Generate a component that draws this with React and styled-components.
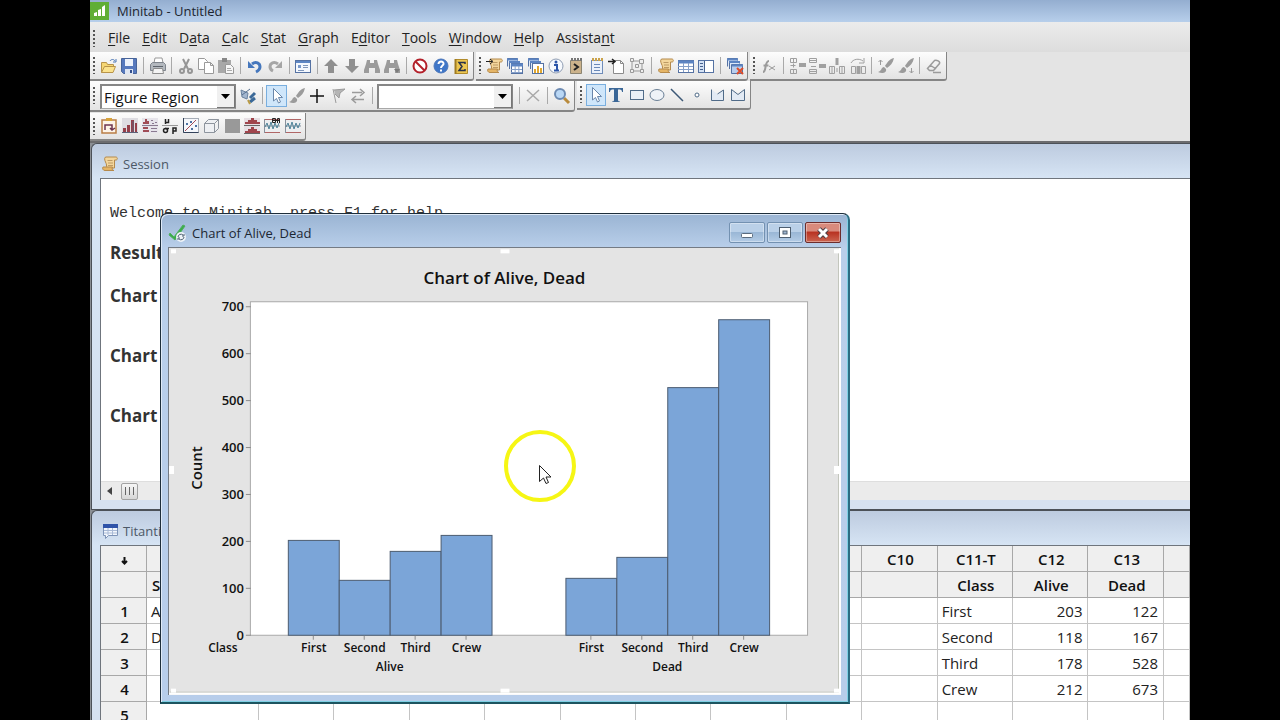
import React from "react";
import styled, { createGlobalStyle, css } from "styled-components";

const GlobalStyle = createGlobalStyle`
  *, *::before, *::after { box-sizing: border-box; }
  body { margin: 0; background: #000; }
  button, select, input { font: inherit; color: inherit; }
`;

/* ---------- application frame ---------- */

const Stage = styled.div`
  height: 100vh;
  padding: 0 90px;
  overflow: hidden;
  background: #000;
  font-family: "Open Sans", "Noto Sans", sans-serif;
  font-size: 13px;
  color: #222;
`;

const AppFrame = styled.div`
  position: relative;
  display: flex;
  flex-direction: column;
  height: 100%;
  overflow: hidden;
  background: #e4e4e4;
`;

const TitleBar = styled.header`
  display: flex;
  align-items: center;
  gap: 8px;
  height: 22px;
  flex: none;
  background: linear-gradient(#94aed0, #b7cfeb);
  font-size: 13px;
  color: #1c2530;
`;

const MenuBar = styled.nav`
  display: flex;
  align-items: center;
  gap: 3px;
  height: 30px;
  flex: none;
  padding: 2px 2px 0;
  background: linear-gradient(#ececec, #dddddd);
`;

const MenuItem = styled.button`
  padding: 0 6px;
  border: 0;
  background: none;
  font-size: 14px;
  line-height: 20px;
  color: #222;
  u { text-underline-offset: 2px; }
`;

const MenuList = styled.div`
  display: flex;
  align-items: center;
`;

const ToolArea = styled.div`
  flex: none;
  background: #e4e4e4;
  border-bottom: 2px solid #6c6c6e;
`;

const ToolRow = styled.div`
  display: flex;
  align-items: flex-start;
  gap: 2px;
  height: ${(p) => p.$height}px;
`;

const ToolGroup = styled.div`
  display: flex;
  align-items: center;
  width: ${(p) => p.$width}px;
  height: ${(p) => p.$height}px;
  padding: 0 2px;
  border-right: 1px solid #858585;
  border-bottom: 2px solid #858585;
  border-radius: 0 0 3px 0;
  background: linear-gradient(#fdfdfd, #e3e3e3);
`;

const Grip = styled.span`
  flex: none;
  width: 4px;
  height: 17px;
  margin-right: 3px;
  background: radial-gradient(circle at 2px 1px, #555 1px, transparent 1px) 0 0 / 4px 4px;
`;

const ToolButton = styled.button`
  display: flex;
  flex: 1;
  align-items: center;
  justify-content: center;
  height: 22px;
  min-width: 0;
  padding: 0;
  border: 1px solid ${(p) => (p.$active ? "#79aede" : "transparent")};
  background: ${(p) => (p.$active ? "#cfe6fa" : "none")};
  svg { flex: none; }
`;

const Divider = styled.span`
  flex: none;
  width: 8px;
  height: 17px;
  background: linear-gradient(#a9a9a9, #a9a9a9) center / 1px 100% no-repeat;
`;

const Combo = styled.label`
  position: relative;
  flex: none;
  width: 136px;
  height: 25px;
  margin: 2px 2px 0 1px;
  select {
    width: 100%;
    height: 100%;
    padding: 0 22px 0 2px;
    border: 2px solid #868686;
    border-right: 1px solid #868686;
    border-bottom: 1px solid #a8a8a8;
    border-radius: 0;
    appearance: none;
    background: #fff;
    font-size: 15px;
    line-height: 20px;
    color: #111;
  }
`;

const ComboArrow = styled.span`
  position: absolute;
  right: 1px;
  top: 2px;
  bottom: 1px;
  width: 18px;
  display: flex;
  align-items: center;
  justify-content: center;
  border-right: 1px solid #777;
  border-bottom: 1px solid #777;
  background: #f0f0f0;
  pointer-events: none;
`;

/* ---------- child windows ---------- */

const Workspace = styled.main`
  position: relative;
  display: grid;
  grid-template-rows: 367px 1fr;
  flex: 1;
  min-height: 0;
  padding-left: 1px;
  background: #8b8f94;
`;

const ChildWindow = styled.section`
  display: flex;
  flex-direction: column;
  min-width: 0;
  min-height: 0;
  padding: 0 0 ${(p) => p.$bottom}px 8px;
  border: solid #4c5158;
  border-width: 1px 0 ${(p) => (p.$bottom ? 1 : 0)}px 1px;
  border-top-left-radius: 6px;
  background: linear-gradient(#bdcbdf, #d6e4f4 34px, #d6e1f0);
`;

const ChildTitle = styled.h2`
  display: flex;
  align-items: center;
  gap: 4px;
  flex: none;
  height: 34px;
  margin: 0;
  padding: 6px 0 0 1px;
  font-size: 13px;
  font-weight: 400;
  color: #4c5867;
`;

const Pane = styled.div`
  display: flex;
  flex-direction: column;
  flex: 1;
  min-height: 0;
  overflow: hidden;
  border: solid #6f757d;
  border-width: 1px 0 0 1px;
  background: #fff;
`;

const SessionText = styled.div`
  display: flex;
  flex-direction: column;
  flex: 1;
  padding: 24px 9px 0;
`;

const Welcome = styled.p`
  margin: 0 0 16px;
  font: 15px/22px "Liberation Mono", monospace;
  color: #333;
`;

const SessionHeading = styled.h3`
  margin: 0 0 ${(p) => p.$after}px;
  font-size: 17px;
  line-height: 24px;
  font-weight: 700;
  color: #333;
`;

const ScrollTrack = styled.div`
  display: flex;
  align-items: center;
  gap: 3px;
  flex: none;
  height: 19px;
  background: #ebebeb;
  border-top: 1px solid #dedede;
`;

const ScrollButton = styled.button`
  display: flex;
  align-items: center;
  justify-content: center;
  width: 17px;
  height: 17px;
  padding: 0;
  border: 0;
  background: none;
`;

const ScrollThumb = styled(ScrollButton)`
  border: 1px solid #a2a2a2;
  border-radius: 2px;
  background: linear-gradient(#f6f6f6, #d6d6d6);
`;

/* ---------- worksheet ---------- */

const Sheet = styled.table`
  width: 100%;
  table-layout: fixed;
  border-collapse: separate;
  border-spacing: 0;
  font-size: 15px;
  line-height: 20px;
  color: #222;
  tr { height: 26px; }
`;

const HeadCell = styled.th`
  padding: 0 3px 0 5px;
  border: solid #a8a8a8;
  border-width: 0 1px 1px 0;
  background: #efefef;
  font-size: 15px;
  font-weight: 600;
  text-align: ${(p) => (p.$left ? "left" : "center")};
  white-space: nowrap;
  overflow: hidden;
  color: #111;
`;

const Cell = styled.td`
  padding: 0 5px 0 4px;
  border: solid #c4c4c4;
  border-width: 0 1px 1px 0;
  background: #fff;
  text-align: ${(p) => (p.$number ? "right" : "left")};
  white-space: nowrap;
  overflow: hidden;
`;

/* ---------- chart window ---------- */

const ChartWindow = styled.section`
  position: absolute;
  left: 70px;
  top: 70px;
  display: flex;
  flex-direction: column;
  width: 690px;
  height: 491px;
  padding: 0 7px 7px;
  border: 1px solid #1d2d3a;
  border-right: 2px solid #2c6d83;
  border-bottom: 2px solid #1d5560;
  border-radius: 7px 7px 0 0;
  box-shadow: inset 1px 1px 0 #dfeaf7, inset -1px -1px 0 #7fd0e4;
  background: linear-gradient(#9ab4d3, #b9cfea 34px, #b7cdea);
`;

const ChartTitleBar = styled.header`
  display: flex;
  align-items: center;
  gap: 4px;
  flex: none;
  height: 33px;
  padding: 4px 0 0;
`;

const ChartTitle = styled.h2`
  flex: 1;
  margin: 0;
  font-size: 13px;
  font-weight: 400;
  line-height: 20px;
  color: #1c2733;
`;

const CaptionButtons = styled.div`
  display: flex;
  gap: 2px;
`;

const CaptionButton = styled.button`
  display: flex;
  align-items: center;
  justify-content: center;
  width: 36px;
  height: 21px;
  padding: 0;
  border: 1px solid #7391b1;
  border-radius: 2px;
  background: linear-gradient(#bad0e8 45%, #9ab7d6 50%, #b4cce6);
  box-shadow: inset 0 0 0 1px rgba(255, 255, 255, 0.35);
  ${(p) =>
    p.$close &&
    css`
      border-color: #6c2c2c;
      background: linear-gradient(#d98a7c 40%, #b93423 50%, #cb6450);
    `}
`;

const ChartPane = styled.div`
  flex: 1;
  min-height: 0;
  border: solid #747b84;
  border-width: 1px 0 0 1px;
  background: #e4e4e4;
  svg { display: block; width: 100%; height: 100%; }
`;

const Pointer = styled.div`
  position: absolute;
  left: 412px;
  top: 428px;
  pointer-events: none;
  svg { display: block; }
`;

/* ---------- icons ---------- */

const G = "#9b9b9b";
const NAVY = "#5572a3";

const Scroll = () => (
  <>
    <path d="M5 2h10c1.500 0 2 3 0 3h-1.500v8H5c1-2 .5-4-.5-6S3 2 5 2z" fill="#f3d69c" stroke="#b58a4c" />
    <path d="M2 12h9.500c-1 1.500 0 3.500 1.500 3.500H4C2 15.500 1 13.500 2 12z" fill="#e5b566" stroke="#b58a4c" />
    <path d="M6.500 5.500h5M7 8h5M7 10.500h5" stroke="#bd9a64" />
  </>
);
const Grid = ({ x = 1, y = 3, w = 15, h = 12 }) => (
  <>
    <rect x={x + 0.5} y={y + 0.5} width={w} height={h} fill="#fff" stroke={NAVY} />
    <path d={`M${x} ${y + 2}h${w + 1}`} stroke="#5c84c2" strokeWidth="3" />
    <path
      d={`M${x} ${y + 6.5}h${w}M${x} ${y + 9.5}h${w}M${x + w / 3 + 0.5} ${y + 3}v${h - 3}M${x + (2 * w) / 3 + 0.5} ${y + 3}v${h - 3}`}
      stroke="#86a0c9"
    />
  </>
);
const Stack = () => (
  <>
    <path d="M1.500 9.500v-8h10v2" fill="#dce8f8" stroke={NAVY} />
    <path d="M1 2.500h11" stroke="#5c84c2" strokeWidth="2" />
    <path d="M3.500 12v-7.500h10v2" fill="#dce8f8" stroke={NAVY} />
    <path d="M3 5h11" stroke="#5c84c2" strokeWidth="2" />
  </>
);
const Binoculars = () => (
  <path d="M4 3h3v3h4V3h3l1 4 2 6v3h-5v-5H6v5H1v-3l2-6z" fill={G} />
);
const Brush = () => (
  <path d="M17 1c-5 1-7 5-9 8l2 2c3-2 6-5 7-10zM7 10c-3 0-2 4-6 5 4 2 9 1 8-3z" fill={G} />
);
const Arrow = () => (
  <path d="M5.500 1.500v12.500l3-2.500 2 4.500 2-1-2-4.500h4z" fill="#fff" stroke="#6b87aa" strokeLinejoin="round" />
);
const Note = () => (
  <>
    <rect x="3.500" y="3.500" width="11" height="13" fill="#eaf1fb" stroke="#6f8cb8" />
    <path d="M4 2.500h11" stroke="#caa24a" strokeWidth="3" strokeDasharray="2 1" />
    <path d="M6 7.500h6M6 10.500h6M6 13.500h6" stroke="#6a89b8" />
  </>
);
const Bars = () => (
  <>
    <path d="M1 1h16v14H1z" fill="#dedde2" />
    <path d="M2 15v-4h3v4zM6 15V8h3v7zM10 15V3h3v12zM14 15V6h2v9z" fill="#96404a" />
    <path d="M1 15.500h16M12 4v11" stroke="#5d627a" />
  </>
);
const ControlChart = () => (
  <>
    <path d="M1 3h16v12H1z" fill="#eceef0" />
    <path d="M1 2.500h16M1 15.500h16" stroke="#b06666" />
    <path d="M1.500 2v14M1 9h16" stroke="#88919c" />
    <path d="M2 10l2-4 2 6 2-7 2 7 2-6 2 5 2-5" stroke="#4e8399" fill="none" />
  </>
);

const icons = {
  open: (
    <>
      <path d="M1.500 15.500V5.500h5l1 2h6v3" fill="#f6d774" stroke="#b8944a" />
      <path d="M1.500 15.500l3-6h11l-2.500 6z" fill="#fbe28d" stroke="#b8944a" />
      <path d="M10 4c1-2 4-2 5 0m1-2v3h-3" fill="none" stroke="#4d77b5" />
    </>
  ),
  save: (
    <>
      <path d="M1.500 1.500h15v15h-13l-2-2z" fill="#5779bd" stroke="#486499" />
      <path d="M5 2h8v7H5z" fill="#eef3fb" />
      <path d="M5 12h8v5H5z" fill="#dfe6f2" />
      <path d="M10 13h2v3h-2z" fill="#35508c" />
    </>
  ),
  print: (
    <>
      <path d="M5 6l1-5h7l1 5z" fill="#fff" stroke="#999" />
      <path d="M1.500 7.500l2-2h11l2 2v6h-15z" fill="#b3b8be" stroke="#7e848c" />
      <path d="M4.500 11.500h9l1 5h-11z" fill="#f4f4f4" stroke="#8d8d8d" />
      <path d="M4 9.500h10" stroke="#5c626a" />
    </>
  ),
  cut: (
    <g fill="none" stroke="#959595" strokeWidth="2">
      <path d="M6 2l5 10M12 2L7 12" />
      <circle cx="5" cy="14" r="2" />
      <circle cx="13" cy="14" r="2" />
    </g>
  ),
  copy: (
    <g fill="#fff" stroke="#999">
      <path d="M1.500 1.500h6l3 3v8h-9z" />
      <path d="M7.500 5.500h6l3 3v8h-9zM13.500 5.500v3h3" />
    </g>
  ),
  paste: (
    <>
      <path d="M1 3h13v13H1z" fill="#a8a8a8" />
      <path d="M5 1h5v4H5z" fill="#888" />
      <path d="M8.500 7.500h5l3 3v6h-8z" fill="#f6f6f6" stroke="#999" />
      <path d="M10 11.500h4M10 13.500h5" stroke="#aaa" />
    </>
  ),
  undo: (
    <>
      <path d="M6 7c4-3 8-1 8 3-.2 2.500-2 4-4 5" fill="none" stroke="#4577bd" strokeWidth="3" />
      <path d="M2 4v7h7z" fill="#4577bd" />
    </>
  ),
  redo: (
    <>
      <path d="M12 7C8 4 4 6 4 10c.2 2 1 3 3 4" fill="none" stroke="#a5a5a5" strokeWidth="3" />
      <path d="M16 4v7H9z" fill="#a5a5a5" />
    </>
  ),
  dialog: (
    <>
      <rect x="1.500" y="3.500" width="15" height="12" fill="#f4f8fe" stroke={NAVY} />
      <path d="M2 5h14" stroke="#5d86c4" strokeWidth="2" />
      <path d="M4 8h3v3H4z" fill="#7899cb" />
      <path d="M9 8.500h5M9 10.500h5M4 13.500h6" stroke="#8097bb" />
    </>
  ),
  up: <path d="M9 2l7 7h-4v7H6V9H2z" fill="#8f8f8f" />,
  down: <path d="M9 16l7-7h-4V2H6v7H2z" fill="#8f8f8f" />,
  find: <Binoculars />,
  findNext: (
    <>
      <Binoculars />
      <path d="M11 12h6l-3 4z" fill="#7c7c7c" />
    </>
  ),
  cancel: (
    <g fill="none" stroke="#b3202a" strokeWidth="2">
      <circle cx="9" cy="9" r="6.500" fill="#fff" />
      <path d="M4.500 4.500l9 9" />
    </g>
  ),
  help: (
    <>
      <circle cx="9" cy="9" r="7" fill="#3e76c8" stroke="#4a75b8" />
      <path d="M6.500 7c0-3.500 5.500-3 5 0-.3 1.500-2.500 2-2.500 4M9 12.500v2" fill="none" stroke="#fff" strokeWidth="2" />
    </>
  ),
  sigma: (
    <>
      <path d="M3.500 2.500h12v14h-12z" fill="#ecc651" stroke="#b18b2b" />
      <path d="M3.500 2v15" stroke="#a07c22" strokeWidth="2" />
      <path d="M13 7V5.500H7l3 4-3 4h6V12" fill="none" stroke="#28324a" strokeWidth="1.500" />
    </>
  ),
  scrollIn: (
    <>
      <Scroll />
      <path d="M0 4.500h6M4 2l3 2.500L4 7" stroke="#222" fill="none" />
    </>
  ),
  sheets: (
    <>
      <Stack />
      <Grid x={5} y={6} w={11} h={10} />
    </>
  ),
  graphs: (
    <>
      <Stack />
      <rect x="5.500" y="6.500" width="11" height="10" fill="#fff" stroke={NAVY} />
      <path d="M7 16v-4h2v4zM10 16V9h2v7zM13 16v-5h2v5z" fill="#e0a72f" />
    </>
  ),
  info: (
    <>
      <circle cx="9" cy="9" r="7" fill="#f6f9fd" stroke="#8f9db3" />
      <path d="M7 8h3v5M7 13.500h5" stroke="#2c55a8" strokeWidth="2" fill="none" />
      <circle cx="9" cy="5" r="1.500" fill="#2c55a8" />
    </>
  ),
  history: (
    <>
      <path d="M3.500 3.500h11v13h-11z" fill="#cbb28b" stroke="#8b8471" />
      <path d="M4 2.500h11" stroke="#777" strokeWidth="3" strokeDasharray="2 1" />
      <path d="M7 7l4 3-4 3" fill="none" stroke="#222" strokeWidth="2" />
    </>
  ),
  report: <Note />,
  docIn: (
    <>
      <path d="M5.500 3.500h7l3 3v10h-10z" fill="#fff" stroke="#8b8b8b" />
      <path d="M12.500 3.500v3h3" fill="none" stroke="#8b8b8b" />
      <path d="M0 4.500h6M4 2l3 2.500L4 7" stroke="#222" fill="none" strokeWidth="1.500" />
    </>
  ),
  related: (
    <g fill="#eee" stroke="#999">
      <path d="M4 4h10v10H4z" />
      <path d="M2.500 1.500h3v3h-3zM11.500 2.500h4v4h-4zM2.500 12.500h3v3h-3zM12.500 12.500h3v3h-3zM7.500 7.500h3v3h-3z" />
    </g>
  ),
  scroll: <Scroll />,
  grid: <Grid />,
  project: (
    <>
      <rect x="1.500" y="3.500" width="15" height="12" fill="#fff" stroke={NAVY} />
      <path d="M2 4h5v11H2z" fill="#d4e2f5" />
      <path d="M3 6.500h3M3 9.500h3M3 12.500h3M7.500 4v11" stroke="#47628f" />
    </>
  ),
  closeAll: (
    <>
      <Stack />
      <path d="M5.500 7.500h11v9h-11z" fill="#b9cdec" stroke={NAVY} />
      <path d="M6 8.500h11" stroke="#5c84c2" strokeWidth="2" />
      <path d="M11 11l6 6M17 11l-6 6" stroke="#dd4b28" strokeWidth="2" />
    </>
  ),
  formula: (
    <g fill="none" stroke="#9b9b9b">
      <path d="M3 15c2 0 2-2 2.500-5S6.500 4 9 4M3.500 8.500h5" strokeWidth="2" />
      <path d="M9 9l6 4M15 9l-6 4" />
    </g>
  ),
  insertCells: (
    <g fill="none" stroke="#a0a0a0">
      <path d="M2.500 1.500h6v4h-6zM2.500 12.500h6v4h-6zM5.500 2v3M5.500 13v3M2.500 8.500h5M5.500 6.500v4" />
      <path d="M11 8h7" strokeWidth="4" />
    </g>
  ),
  insertRow: (
    <g fill="none" stroke="#a0a0a0">
      <path d="M1.500 1.500h7v4h-7zM1.500 12.500h7v4h-7zM2 14.500h6M2 3.500h6M3 9.500h5" />
      <path d="M11 9h7" strokeWidth="4" />
    </g>
  ),
  insertCol: (
    <g fill="none" stroke="#a0a0a0">
      <path d="M1.500 9.500h5v7h-5zM11.500 9.500h5v7h-5zM4 10v6M14 10v6M9 11v4" />
      <path d="M9 1v7" strokeWidth="3" />
    </g>
  ),
  moveCol: (
    <g fill="none" stroke="#a0a0a0">
      <path d="M2.500 9.500h4v7h-4zM12.500 9.500h4v7h-4z" />
      <path d="M9.500 9v8" strokeWidth="4" />
      <path d="M2 6c2-4 8-5 12-2m1-3v5h-5" />
    </g>
  ),
  prevBrush: (
    <>
      <Brush />
      <path d="M3.500 8V3M1.500 5l2-2 2 2" stroke={G} fill="none" />
    </>
  ),
  nextBrush: (
    <>
      <Brush />
      <path d="M14.500 11v5M12.500 14l2 2 2-2" stroke={G} fill="none" />
    </>
  ),
  eraser: <path d="M2.500 11.500l7-8c2-1 6 1 5 3l-6 7h-4zM5 8l6 4M8 15.500h8" fill="none" stroke={G} strokeWidth="1.500" />,
  assign: (
    <>
      <path d="M2 3l7 3-1 6-5-2z" fill="#a3b6cf" stroke="#6b839f" />
      <path d="M3 8l8-6" stroke="#56708f" />
      <path d="M16 6l-5 5M16 11l-5 4" stroke="#3b6998" strokeWidth="3" />
      <path d="M9 13l2 4" stroke="#b99a44" strokeWidth="2" />
    </>
  ),
  select: <Arrow />,
  brush: <Brush />,
  plus: <path d="M9 2v14M2 9h14" stroke="#111" strokeWidth="1.500" />,
  flag: <path d="M4 2l3 14M5 3l11-1-5 4-1 5-4-4" fill="#b5b5b5" stroke={G} />,
  swap: <path d="M3 5.500h10M4 12.500h11M11 2l4 3.500L11 9M7 9l-4 3.500L7 16" fill="none" stroke={G} strokeWidth="1.500" />,
  remove: <path d="M3 3l12 11M15 3L3 14" stroke="#a9a9a9" strokeWidth="1.500" />,
  zoom: (
    <>
      <path d="M11 11l5 5" stroke="#b98b3d" strokeWidth="3" />
      <circle cx="7" cy="7" r="5" fill="#b9d7f5" stroke="#6c8ab2" strokeWidth="2" />
    </>
  ),
  text: <path d="M2 2h14v4h-1c0-2-1-2.500-4-2.500V14c0 1 1 1.500 2 1.500v.5H5v-.5c1 0 2-.5 2-1.500V3.500C4 3.500 3 4 3 6H2z" fill="#3b6797" />,
  rect: <rect x="2.500" y="4.500" width="13" height="9" fill="#eaf0f7" stroke="#506b88" />,
  ellipse: <ellipse cx="9" cy="9" rx="7" ry="5.500" fill="#eef2f7" stroke="#6b8096" />,
  line: <path d="M3 3l12 12" stroke="#3c5876" strokeWidth="1.500" />,
  marker: <circle cx="9" cy="9" r="2" fill="#fff" stroke="#506b88" />,
  polyline: <path d="M2.500 3.500v11h12V4L8.500 8" fill="#e2eaf4" stroke="#506b88" />,
  polygon: <path d="M2.500 3.500v11h13v-11l-6.500 5z" fill="#e2eaf4" stroke="#506b88" />,
  clip: (
    <>
      <path d="M2 3h14v13H2z" fill="#fdf4e8" stroke="#b97e45" strokeWidth="1.500" />
      <path d="M6 1h6v3H6z" fill="#d7a33c" />
      <path d="M5 13V8h7v4M10 11l2 2 3-2" stroke="#6d3450" fill="none" strokeWidth="1.500" />
    </>
  ),
  bars: <Bars />,
  panels: (
    <>
      <path d="M1 1h16v15H1z" fill="#e6e4ea" />
      <path d="M2 7V5h2v2zM4 7V2h2v5zM6 7V4h2v3zM2 10h5v2H2zM2 13h6v2H2z" fill="#a04c55" />
      <path d="M10 3.500h2M14 5.500h2M11 6.500h2M10 11.500h6M10 14.500h6M1 8.500h16" stroke="#8a7a90" />
    </>
  ),
  stats: (
    <>
      <path d="M1 8.500h16" stroke="#999" />
      <path d="M4.500 7V2M4 5.500h3.500V2" stroke="#222" strokeWidth="1.500" fill="none" />
      <circle cx="4.500" cy="13.500" r="2" stroke="#222" strokeWidth="1.500" fill="none" />
      <path d="M4 11.500h4M12 17v-6h3v3h-3" stroke="#222" strokeWidth="1.500" fill="none" />
    </>
  ),
  scatter: (
    <>
      <rect x="1.500" y="1.500" width="15" height="14" fill="#f5f7fb" stroke="#a5acb6" />
      <path d="M3 14L14 3" stroke="#a64c57" />
      <path d="M4 6h2v2H4zM8 4h2v2H8zM9 11h2v2H9zM13 8h2v2h-2z" fill="#4e72a3" />
      <path d="M1.500 1v14.500h15" stroke="#33425a" fill="none" />
    </>
  ),
  cube: <path d="M2.500 6.500h10v9h-10zM2.500 6.500l4-4h10l-4 4M16.500 2.500v9l-4 4" fill="#eef0f3" stroke="#8d949d" />,
  blank: <path d="M2 2h15v14H2z" fill="#999" />,
  twoBars: (
    <>
      <path d="M1 1h16v15H1z" fill="#e6dfe4" />
      <path d="M2 7V5h3V3h3V1h3v2h3v2h3v2zM2 16v-2h3v-2h3v-2h3v2h3v2h3v2z" fill="#a0454c" />
      <path d="M1 8.500h16M1 16.500h16" stroke="#666" />
    </>
  ),
  beforeAfter: (
    <>
      <ControlChart />
      <path d="M9.500 1.500h3v4h-3zM14.500 6V1.500h2V6M9.500 3.500h7" stroke="#222" fill="none" />
    </>
  ),
  control: <ControlChart />,
};

const Icon = ({ name }) => (
  <svg width="18" height="18" viewBox="0 0 18 18" fill="none" aria-hidden="true">
    {icons[name]}
  </svg>
);

const Tools = ({ items, active }) =>
  items.map((name, i) =>
    name === "|" ? (
      <Divider key={i} />
    ) : (
      <ToolButton key={i} type="button" aria-label={name} $active={name === active}>
        <Icon name={name} />
      </ToolButton>
    )
  );

const DropDown = ({ label, options }) => (
  <Combo>
    <select aria-label={label}>
      {options.map((o) => (
        <option key={o}>{o}</option>
      ))}
    </select>
    <ComboArrow>
      <svg width="9" height="5" viewBox="0 0 9 5" aria-hidden="true">
        <path d="M0 0h9L4.500 5z" fill="#000" />
      </svg>
    </ComboArrow>
  </Combo>
);

/* ---------- data ---------- */

const menus = [
  ["", "F", "ile"],
  ["", "E", "dit"],
  ["D", "a", "ta"],
  ["", "C", "alc"],
  ["", "S", "tat"],
  ["", "G", "raph"],
  ["E", "d", "itor"],
  ["", "T", "ools"],
  ["", "W", "indow"],
  ["", "H", "elp"],
  ["Assista", "n", "t"],
];

const fileTools = ["open", "save", "|", "print", "|", "cut", "copy", "paste", "|", "undo", "redo", "|", "dialog", "|", "up", "down", "find", "findNext", "|", "cancel", "help", "sigma"];
const projectTools = ["scrollIn", "sheets", "graphs", "info", "history", "report", "docIn", "related", "|", "scroll", "grid", "project", "|", "closeAll"];
const sheetTools = ["formula", "|", "insertCells", "insertRow", "insertCol", "moveCol", "|", "prevBrush", "nextBrush", "|", "eraser"];
const drawTools = ["select", "text", "rect", "ellipse", "line", "marker", "polyline", "polygon"];
const assistTools = ["clip", "bars", "panels", "stats", "scatter", "cube", "blank", "twoBars", "beforeAfter", "control"];

const passengers = [
  { cls: "First", alive: 203, dead: 122 },
  { cls: "Second", alive: 118, dead: 167 },
  { cls: "Third", alive: 178, dead: 528 },
  { cls: "Crew", alive: 212, dead: 673 },
];

const columns = ["C1-T", "C2", "C3", "C4", "C5", "C6", "C7", "C8", "C9", "C10", "C11-T", "C12", "C13", ""];
const names = { 0: "Survival Status", 10: "Class", 11: "Alive", 12: "Dead" };

const cellValue = (row, col) => {
  if (col === 0) return ["Alive", "Dead"][row] ?? "";
  const p = passengers[row];
  if (!p) return "";
  return { 10: p.cls, 11: p.alive, 12: p.dead }[col] ?? "";
};

/* ---------- chart ---------- */

const ChartText = styled.text`
  font-size: ${(p) => p.$size}px;
  font-weight: 600;
  fill: #111;
  text-anchor: ${(p) => p.$anchor || "middle"};
`;

const BASE = 387;
const BAR = 51;
const yOf = (count) => Math.round(BASE - count * 0.47);
const groups = [
  { key: "alive", label: "Alive", start: 119 },
  { key: "dead", label: "Dead", start: 397 },
];
const ticks = [0, 100, 200, 300, 400, 500, 600, 700];
const handles = [
  [2, 1], [332, 1], [666, 1],
  [0, 218], [666, 218],
  [2, 441], [332, 441], [666, 441],
];

const BarChart = () => (
  <svg viewBox="0 0 673 447" role="img" aria-label="Bar chart of passenger counts by class">
    <path d="M1 444.500h669.500V2" fill="none" stroke="#c3c6bd" />
    <path d="M0 446h672V0" fill="none" stroke="#fff" strokeWidth="2" />
    <ChartText $size={17} x="336" y="36">Chart of Alive, Dead</ChartText>
    <rect x="81.500" y="53.500" width="558" height="334" fill="#fff" stroke="#a9a9a9" />
    {ticks.map((t) => (
      <g key={t}>
        <path d={`M77 ${yOf(t) + 0.5}h5`} stroke="#8c8c8c" />
        <ChartText $size={13} $anchor="end" x="75" y={yOf(t) + 5}>{t}</ChartText>
      </g>
    ))}
    <ChartText $size={15} transform="translate(33 220) rotate(-90)">Count</ChartText>
    {groups.map((g) => (
      <g key={g.key}>
        {passengers.map((p, i) => {
          const x = g.start + i * BAR;
          const top = yOf(p[g.key]);
          return (
            <g key={p.cls}>
              <rect x={x + 0.5} y={top + 0.5} width={BAR} height={BASE - top} fill="#7ba5d8" stroke="#4c5c70" />
              <path d={`M${x + 25.5} 388v4`} stroke="#8c8c8c" />
              <ChartText $size={12} x={x + 26} y="404">{p.cls}</ChartText>
            </g>
          );
        })}
        <ChartText $size={12} x={g.start + BAR * 2} y="423">{g.label}</ChartText>
      </g>
    ))}
    <ChartText $size={12} x="54" y="404">Class</ChartText>
    {handles.map(([x, y]) => (
      <rect key={`${x}-${y}`} x={x} y={y} width={x === 332 ? 9 : 5} height={y === 218 ? 8 : 4} fill="#fff" />
    ))}
  </svg>
);

export default function App() {
  return (
    <Stage>
      <GlobalStyle />
      <AppFrame>
        <TitleBar>
          <svg width="19" height="20" viewBox="0 0 19 20" aria-hidden="true">
            <path d="M0 1h19v18H0z" fill="#5fae36" />
            <path d="M4 12l3-1v4H4zM8 9l3-1v7H8zM12 6l3-2v11h-3z" fill="#fff" />
          </svg>
          Minitab - Untitled
        </TitleBar>
        <MenuBar>
          <Grip />
          <MenuList>
            {menus.map(([pre, key, post]) => (
              <MenuItem key={pre + key + post} type="button">
                {pre}<u>{key}</u>{post}
              </MenuItem>
            ))}
          </MenuList>
        </MenuBar>
        <ToolArea>
          <ToolRow $height={29}>
            <ToolGroup $width={384} $height={29}>
              <Grip />
              <Tools items={fileTools} />
            </ToolGroup>
            <ToolGroup $width={272} $height={29}>
              <Grip />
              <Tools items={projectTools} />
            </ToolGroup>
            <ToolGroup $width={197} $height={29}>
              <Grip />
              <Tools items={sheetTools} />
            </ToolGroup>
          </ToolRow>
          <ToolRow $height={32}>
            <ToolGroup $width={485} $height={31}>
              <Grip />
              <DropDown label="Graph element" options={["Figure Region"]} />
              <Tools items={["assign", "|", "select", "brush", "plus", "flag", "swap", "|"]} active="select" />
              <DropDown label="Symbol" options={[""]} />
              <Tools items={["|", "remove", "|", "zoom"]} />
            </ToolGroup>
            <ToolGroup $width={174} $height={29}>
              <Grip />
              <Tools items={drawTools} active="select" />
            </ToolGroup>
          </ToolRow>
          <ToolRow $height={28}>
            <ToolGroup $width={216} $height={28}>
              <Grip />
              <Tools items={assistTools} />
            </ToolGroup>
          </ToolRow>
        </ToolArea>

        <Workspace>
          <ChildWindow $bottom={9}>
            <ChildTitle>
              <svg width="18" height="18" viewBox="0 0 18 18" aria-hidden="true"><Scroll /></svg>
              Session
            </ChildTitle>
            <Pane>
              <SessionText>
                <Welcome>Welcome to Minitab, press F1 for help.</Welcome>
                <SessionHeading $after={19}>Results for: Titantic.MTW</SessionHeading>
                <SessionHeading $after={36}>Chart of Alive, Dead</SessionHeading>
                <SessionHeading $after={36}>Chart of Alive, Dead</SessionHeading>
                <SessionHeading $after={0}>Chart of Alive, Dead</SessionHeading>
              </SessionText>
              <ScrollTrack>
                <ScrollButton type="button" aria-label="Scroll left">
                  <svg width="5" height="8" viewBox="0 0 5 8" aria-hidden="true"><path d="M5 0v8L0 4z" fill="#444" /></svg>
                </ScrollButton>
                <ScrollThumb type="button" aria-label="Scroll position">
                  <svg width="9" height="8" viewBox="0 0 9 8" aria-hidden="true"><path d="M.5 0v8M4.500 0v8M8.500 0v8" stroke="#666" /></svg>
                </ScrollThumb>
              </ScrollTrack>
            </Pane>
          </ChildWindow>

          <ChildWindow $bottom={0}>
            <ChildTitle>
              <svg width="18" height="18" viewBox="0 0 18 18" aria-hidden="true">
                <path d="M2.500 2.500h14v11h-9l-3 3v-3h-2z" fill="#f3f7fd" stroke="#7f95b8" />
                <path d="M2 4h15" stroke="#2f53a8" strokeWidth="4" />
                <path d="M3 8.500h13M3 11h13M7 6v7M11.500 6v7" stroke="#a9bad6" />
              </svg>
              Titantic.MTW ***
            </ChildTitle>
            <Pane>
              <Sheet>
                <colgroup>
                  <col style={{ width: 46 }} />
                  <col style={{ width: 112 }} />
                  {columns.slice(1, 13).map((c) => <col key={c} />)}
                  <col style={{ width: 26 }} />
                </colgroup>
                <thead>
                  <tr>
                    <HeadCell scope="col" aria-label="Entry direction">
                      <svg width="7" height="8" viewBox="0 0 7 8" aria-hidden="true">
                        <path d="M3.500 0v6M1 4l2.500 2.500L6 4" fill="none" stroke="#111" strokeWidth="2" />
                      </svg>
                    </HeadCell>
                    {columns.map((c, i) => <HeadCell key={i} scope="col">{c}</HeadCell>)}
                  </tr>
                  <tr>
                    <HeadCell />
                    {columns.map((c, i) => <HeadCell key={i} $left={i === 0}>{names[i]}</HeadCell>)}
                  </tr>
                </thead>
                <tbody>
                  {[0, 1, 2, 3, 4].map((row) => (
                    <tr key={row}>
                      <HeadCell scope="row">{row + 1}</HeadCell>
                      {columns.map((c, col) => (
                        <Cell key={col} $number={col > 10}>{cellValue(row, col)}</Cell>
                      ))}
                    </tr>
                  ))}
                </tbody>
              </Sheet>
            </Pane>
          </ChildWindow>

          <ChartWindow>
            <ChartTitleBar>
              <svg width="20" height="20" viewBox="0 0 20 20" aria-hidden="true">
                <path d="M2 10l4 4L15 2l2 1L7 17 1 12z" fill="#39ad4a" stroke="#4fae60" />
                <circle cx="13" cy="14" r="5" fill="#eef3f8" />
                <path d="M10 14a3 3 0 0 1 5-2m1-1v2h-2M16 14a3 3 0 0 1-5 2m-1 1v-2h2" fill="none" stroke="#4d6074" />
              </svg>
              <ChartTitle>Chart of Alive, Dead</ChartTitle>
              <CaptionButtons>
                <CaptionButton type="button" aria-label="Minimize">
                  <svg width="14" height="12" viewBox="0 0 14 12" aria-hidden="true">
                    <rect x="1.500" y="6.500" width="11" height="4" rx="1" fill="#fff" stroke="#5a6b7d" />
                  </svg>
                </CaptionButton>
                <CaptionButton type="button" aria-label="Maximize">
                  <svg width="12" height="12" viewBox="0 0 12 12" aria-hidden="true">
                    <rect x=".5" y=".5" width="11" height="10" fill="#fff" stroke="#4f5f70" />
                    <rect x="4" y="4" width="4" height="3" fill="#9fb6d0" stroke="#4f5f70" />
                  </svg>
                </CaptionButton>
                <CaptionButton type="button" aria-label="Close" $close>
                  <svg width="14" height="12" viewBox="0 0 14 12" aria-hidden="true">
                    <path d="M3 2l8 8M11 2l-8 8" stroke="#4d3f45" strokeWidth="5" />
                    <path d="M3 2l8 8M11 2l-8 8" stroke="#fff" strokeWidth="3" />
                  </svg>
                </CaptionButton>
              </CaptionButtons>
            </ChartTitleBar>
            <ChartPane>
              <BarChart />
            </ChartPane>
          </ChartWindow>
        </Workspace>

        <Pointer>
          <svg width="76" height="76" viewBox="0 0 76 76" aria-hidden="true">
            <circle cx="38" cy="38" r="34" fill="none" stroke="#f6f614" strokeWidth="4" />
            <path d="M37.500 37.500v16l4-3.500 2.500 5.500 2.500-1-2.500-5.500h5z" fill="#fff" stroke="#222" />
          </svg>
        </Pointer>
      </AppFrame>
    </Stage>
  );
}
